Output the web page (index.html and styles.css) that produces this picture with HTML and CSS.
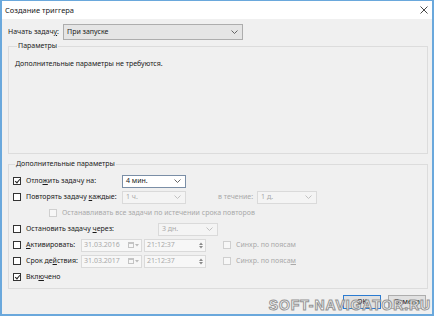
FILE: index.html
```html
<!DOCTYPE html>
<html lang="ru">
<head>
<meta charset="utf-8">
<title>Создание триггера</title>
<link rel="stylesheet" href="styles.css">
</head>
<body>
<div class="window">
  <div class="titlebar">
    <span class="title">Создание триггера</span>
    <svg class="close" width="8" height="8" viewBox="0 0 8 8"><path d="M0.5 0.5 L7.5 7.5 M7.5 0.5 L0.5 7.5" stroke="#333" stroke-width="0.9" fill="none"/></svg>
  </div>
  <div class="body">
    <div class="start-row">
      <span class="start-label">Начать задач<u>у</u>:</span>
      <div class="combo combo-main"><span>При запуске</span><svg class="chev" width="7" height="4" viewBox="0 0 7 4"><polyline points="0.5,0.5 3.5,3.5 6.5,0.5" fill="none" stroke="#555" stroke-width="0.9"/></svg></div>
    </div>

    <fieldset class="group g1">
      <legend>Параметры</legend>
      <p class="note">Дополнительные параметры не требуются.</p>
    </fieldset>

    <fieldset class="group g2">
      <legend>Дополнительные параметры</legend>

      <div class="row">
        <label class="cb w-delay"><span class="box checked"></span><span>Отло<u>ж</u>ить задачу на:</span></label>
        <div class="combo field-sm active"><span>4 мин.</span><svg class="chev" width="7" height="4" viewBox="0 0 7 4"><polyline points="0.5,0.5 3.5,3.5 6.5,0.5" fill="none" stroke="#555" stroke-width="0.9"/></svg></div>
      </div>

      <div class="row">
        <label class="cb w-delay"><span class="box"></span><span>Повторять задачу <u>к</u>аждые:</span></label>
        <div class="combo field-sm disabled"><span>1 ч.</span><svg class="chev" width="7" height="4" viewBox="0 0 7 4"><polyline points="0.5,0.5 3.5,3.5 6.5,0.5" fill="none" stroke="#bbb" stroke-width="0.9"/></svg></div>
        <span class="during dim">в течение:</span>
        <div class="combo field-md disabled"><span>1 д.</span><svg class="chev" width="7" height="4" viewBox="0 0 7 4"><polyline points="0.5,0.5 3.5,3.5 6.5,0.5" fill="none" stroke="#bbb" stroke-width="0.9"/></svg></div>
      </div>

      <div class="row">
        <label class="cb indent dim"><span class="box off"></span><span>Останавливать все задачи по истечении срока повторов</span></label>
      </div>

      <div class="row">
        <label class="cb w-stop"><span class="box"></span><span>Остановить задачу <u>ч</u>ерез:</span></label>
        <div class="combo field-md disabled"><span>3 дн.</span><svg class="chev" width="7" height="4" viewBox="0 0 7 4"><polyline points="0.5,0.5 3.5,3.5 6.5,0.5" fill="none" stroke="#bbb" stroke-width="0.9"/></svg></div>
      </div>

      <div class="row">
        <label class="cb w-date"><span class="box"></span><span><u>А</u>ктивировать:</span></label>
        <div class="field date disabled"><span>31.03.2016</span><span class="cal"><span class="cal-ico"></span><svg width="4" height="3" viewBox="0 0 4 3"><path d="M0 0 H4 L2 2.5 Z" fill="#bbb"/></svg></span></div>
        <div class="field time disabled"><span>21:12:37</span><span class="spin"><svg width="4" height="3" viewBox="0 0 4 3"><path d="M0 3 H4 L2 0.5 Z" fill="#888"/></svg><svg width="4" height="3" viewBox="0 0 4 3"><path d="M0 0 H4 L2 2.5 Z" fill="#888"/></svg></span></div>
        <label class="cb sync dim"><span class="box off"></span><span>Синхр. по поясам</span></label>
      </div>

      <div class="row">
        <label class="cb w-date"><span class="box"></span><span>Срок де<u>й</u>ствия:</span></label>
        <div class="field date disabled"><span>31.03.2017</span><span class="cal"><span class="cal-ico"></span><svg width="4" height="3" viewBox="0 0 4 3"><path d="M0 0 H4 L2 2.5 Z" fill="#bbb"/></svg></span></div>
        <div class="field time disabled"><span>21:12:37</span><span class="spin"><svg width="4" height="3" viewBox="0 0 4 3"><path d="M0 3 H4 L2 0.5 Z" fill="#888"/></svg><svg width="4" height="3" viewBox="0 0 4 3"><path d="M0 0 H4 L2 2.5 Z" fill="#888"/></svg></span></div>
        <label class="cb sync dim"><span class="box off"></span><span>Синхр. по пояса<u>м</u></span></label>
      </div>

      <div class="row">
        <label class="cb"><span class="box checked"></span><span>Вкл<u>ю</u>чено</span></label>
      </div>
    </fieldset>

    <div class="buttons">
      <button class="btn default">OK</button>
      <button class="btn">Отмена</button>
    </div>
  </div>
  <div class="watermark">SOFT-NAVIGATOR.RU</div>
</div>
</body>
</html>
```

FILE: styles.css
```css
html, body {
  margin: 0;
  padding: 0;
}
body {
  width: 434px;
  height: 316px;
  font-family: "Noto Sans", "Open Sans", sans-serif;
  font-size: 7px;
  line-height: 10px;
  color: #1a1a1a;
  overflow: hidden;
}
u { text-decoration-thickness: 0.5px; text-underline-offset: 1px; }

.window {
  position: relative;
  width: 434px;
  height: 316px;
  box-sizing: border-box;
  border: 2px solid #6aa8dc;
  border-top-width: 1px;
  background: #f0f0f0;
  display: flex;
  flex-direction: column;
  overflow: hidden;
}

.titlebar {
  height: 18px;
  flex: none;
  background: #fff;
  display: flex;
  align-items: center;
  justify-content: space-between;
  padding: 0 4px 0 3px;
}
.title { font-size: 7.5px; }
.close { display: block; }

.body {
  flex: 1;
  padding: 0 4px 0 6px;
  display: flex;
  flex-direction: column;
}

.start-row {
  margin-top: 5px;
  height: 16px;
  display: flex;
  align-items: center;
}
.start-label { width: 55px; }

.combo {
  box-sizing: border-box;
  display: flex;
  align-items: center;
  justify-content: space-between;
  border: 1px solid #adadad;
  background: #e5e5e5;
  padding: 0 4px 0 3px;
}
.combo-main { width: 180px; height: 16px; }
.chev { display: block; flex: none; }

.group {
  margin: 0;
  padding: 0;
  border: 1px solid #dcdcdc;
  box-sizing: border-box;
  min-width: 0;
}
.group legend {
  margin-left: 2px;
  padding: 0 1px;
  line-height: 10px;
}
.g1 {
  margin-top: 1px;
  height: 113px;
  padding: 8px 6px 0;
}
.note { margin: 0; }

.g2 {
  margin-top: 5px;
  height: 130px;
  padding: 4px 4px 0;
}

.row {
  height: 16px;
  display: flex;
  align-items: center;
}

.cb {
  display: flex;
  align-items: center;
  gap: 5px;
  flex: none;
}
.box {
  width: 8px;
  height: 8px;
  box-sizing: border-box;
  border: 1px solid #333;
  background: #fff;
  position: relative;
  flex: none;
}
.box.off { border-color: #cfcfcf; background: #f7f7f7; }
.box.checked::after {
  content: "";
  position: absolute;
  left: 2px;
  top: 0px;
  width: 2px;
  height: 4px;
  border: solid #222;
  border-width: 0 1px 1px 0;
  transform: rotate(40deg);
}

.w-delay { width: 109px; }
.w-stop { width: 145px; }
.w-date { width: 68px; }
.indent { margin-left: 36px; }
.dim { color: #a9a9a9; }

.field-sm { width: 64px; height: 13px; }
.field-md { width: 60px; height: 13px; }
.combo.active { background: #fff; border-color: #7a8ea6; }
.combo.disabled { background: #f4f4f4; border-color: #dadada; color: #a9a9a9; }

.during { margin-left: 32px; margin-right: 4px; }

.field {
  box-sizing: border-box;
  height: 13px;
  display: flex;
  align-items: center;
  justify-content: space-between;
  border: 1px solid #dadada;
  background: #f7f7f7;
  color: #a9a9a9;
  padding: 0 2px 0 2px;
}
.date { width: 61px; }
.time { width: 62px; margin-left: 2px; }
.cal { display: flex; align-items: center; gap: 1px; }
.cal-ico {
  width: 6px;
  height: 6px;
  box-sizing: border-box;
  border: 1px solid #c4c4c4;
  border-top-width: 2px;
}
.spin { display: flex; flex-direction: column; gap: 1px; }
.spin svg { display: block; }
.sync { margin-left: 17px; }

.buttons {
  margin-top: 6px;
  margin-right: 2px;
  display: flex;
  justify-content: flex-end;
  gap: 7px;
}
.btn {
  font: inherit;
  font-size: 7px;
  line-height: 10px;
  color: #111;
  height: 14px;
  width: 38px;
  box-sizing: border-box;
  padding: 0;
  border: 1px solid #adadad;
  background: #e1e1e1;
}
.btn.default { border-color: #2b7bd1; }

.watermark {
  position: absolute;
  right: 1px;
  bottom: 2px;
  font-family: "Liberation Sans", sans-serif;
  font-weight: bold;
  font-size: 14px;
  line-height: 14px;
  letter-spacing: 0.9px;
  color: #fff;
  -webkit-text-stroke: 1px #8c8c8c;
  opacity: 0.9;
}
```
